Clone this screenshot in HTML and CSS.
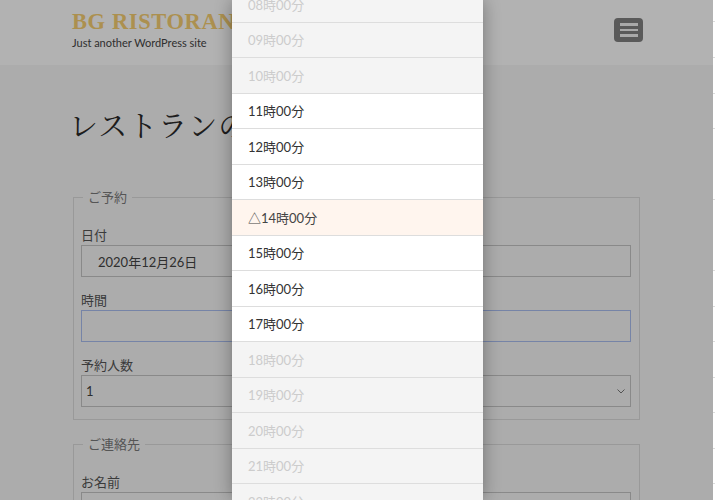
FILE: index.html
```html
<!DOCTYPE html>
<html lang="ja">

<head>
    <meta charset="UTF-8">
    <meta name="viewport" content="width=device-width, initial-scale=1.0">
    <title>レストランの予約</title>
    <link rel="stylesheet" href="styles.css">
</head>

<body>
    <header class="site-header">
        <div class="header-inner">
            <div class="branding">
                <div class="site-title">BG RISTORANTE</div>
                <div class="site-desc">Just another WordPress site</div>
            </div>
            <div class="menu-toggle">
                <span></span>
                <span></span>
                <span></span>
            </div>
        </div>
    </header>

    <main class="content">
        <h1 class="page-title">レストランの予約</h1>

        <fieldset class="form-group">
            <legend>ご予約</legend>
            <label class="field-label">日付</label>
            <div class="field-input date-input">2020年12月26日</div>
            <label class="field-label">時間</label>
            <div class="field-input focused"></div>
            <label class="field-label">予約人数</label>
            <div class="field-input select-input">
                <span>1</span>
                <svg class="chevron" width="8" height="5" viewBox="0 0 8 5">
                    <path d="M0.5 0.5 L4 4 L7.5 0.5" fill="none" stroke="#777" stroke-width="1"/>
                </svg>
            </div>
        </fieldset>

        <fieldset class="form-group">
            <legend>ご連絡先</legend>
            <label class="field-label">お名前</label>
            <div class="field-input"></div>
        </fieldset>
    </main>

    <!-- 時間選択のモーダル -->
    <div class="overlay"></div>
    <div class="edge-strip"></div>
    <div class="time-picker">
        <ul class="time-list">
            <li class="disabled">08時00分</li>
            <li class="disabled">09時00分</li>
            <li class="disabled">10時00分</li>
            <li>11時00分</li>
            <li>12時00分</li>
            <li>13時00分</li>
            <li class="few">△14時00分</li>
            <li>15時00分</li>
            <li>16時00分</li>
            <li>17時00分</li>
            <li class="disabled">18時00分</li>
            <li class="disabled">19時00分</li>
            <li class="disabled">20時00分</li>
            <li class="disabled">21時00分</li>
            <li class="disabled">22時00分</li>
        </ul>
    </div>
</body>

</html>
```

FILE: styles.css
```css
body {
    margin: 0;
    background-color: #f7f7f7;
    font-family: Lato, "Noto Sans CJK JP", sans-serif;
    color: #555;
    overflow: hidden;
    height: 500px;
}

.site-header {
    height: 65px;
    background-color: #fff;
}

.header-inner {
    width: 571px;
    margin-left: 72px;
    display: flex;
    justify-content: space-between;
    align-items: flex-start;
}

.site-title {
    margin-top: 10px;
    font-family: "Liberation Serif", "DejaVu Serif", serif;
    font-weight: bold;
    font-size: 22.5px;
    line-height: 24px;
    letter-spacing: 0.6px;
    color: #f7cf72;
    white-space: nowrap;
}

.site-desc {
    margin-top: 2px;
    font-size: 11px;
    line-height: 14px;
    color: #444;
}

.menu-toggle {
    margin-top: 18px;
    width: 29px;
    height: 24px;
    border-radius: 4px;
    background-color: #818181;
    display: flex;
    flex-direction: column;
    justify-content: center;
    align-items: center;
    gap: 3px;
}

.menu-toggle span {
    width: 18px;
    height: 2.5px;
    background-color: #f2f2f2;
}

.content {
    width: 567px;
    margin-left: 73px;
}

.page-title {
    margin: 38px 0 0 -4px;
    height: 84px;
    font-family: "Noto Serif CJK JP", "Noto Sans CJK JP", serif;
    font-weight: 400;
    font-size: 29px;
    line-height: 44px;
    letter-spacing: 1px;
    color: #2a2a2a;
}

.form-group {
    margin: 0 0 14px;
    padding: 18px 8px 12px 7px;
    border: 1px solid #dbdbdb;
    display: flex;
    flex-direction: column;
}

.form-group legend {
    margin-left: 2px;
    padding: 0 5px;
    font-size: 13px;
    line-height: 20px;
    color: #7a7a7a;
}

.field-label {
    display: block;
    font-size: 13px;
    line-height: 20px;
    color: #555;
}

.field-input {
    height: 30px;
    margin-bottom: 13px;
    border: 1px solid #c5c5c5;
    display: flex;
    align-items: center;
    font-size: 13px;
    color: #444;
}

.field-input:last-child {
    margin-bottom: 0;
}

.date-input {
    padding-left: 16px;
}

.focused {
    border-color: #a9bdf0;
}

.select-input {
    padding-left: 4px;
    padding-right: 5px;
    justify-content: space-between;
}

.overlay {
    position: fixed;
    top: 0;
    left: 0;
    right: 0;
    bottom: 0;
    background-color: rgba(0, 0, 0, 0.3);
}

.edge-strip {
    position: fixed;
    top: 0;
    right: 0;
    width: 2px;
    height: 100%;
    background: repeating-linear-gradient(#fff 0, #fff 21.5px, #ddd 21.5px, #ddd 22.5px, #fff 22.5px, #fff 35.5px);
}

.time-picker {
    position: fixed;
    top: 0;
    left: 232px;
    width: 251px;
    height: 100%;
    overflow: hidden;
    box-shadow: 0 0 18px rgba(0, 0, 0, 0.35);
}

.time-list {
    list-style: none;
    margin: -13px 0 0;
    padding: 0;
}

.time-list li {
    height: 34.5px;
    padding-left: 16px;
    border-bottom: 1px solid #ddd;
    background-color: #fff;
    display: flex;
    align-items: center;
    font-size: 13px;
    color: #333;
}

.time-list li.disabled {
    background-color: #f4f4f4;
    color: #ccc;
}

.time-list li.few {
    background-color: #fff5ee;
    color: #444;
}
```
